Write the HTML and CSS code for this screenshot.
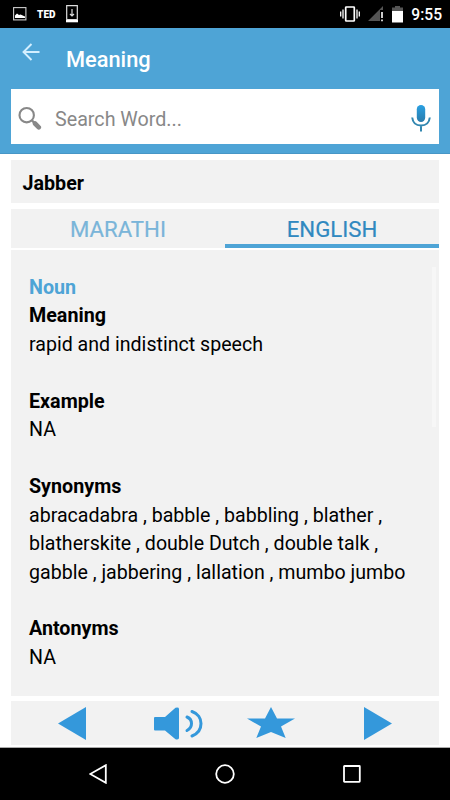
FILE: index.html
```
<!DOCTYPE html>
<html lang="en">
<head>
    <meta charset="UTF-8">
    <meta name="viewport" content="width=device-width, initial-scale=1.0">
    <title>Meaning</title>
    <link rel="stylesheet" href="styles.css">
</head>
<body>
    <div class="status-bar">
        <svg class="icon-picture" width="14" height="14" viewBox="0 0 14 14">
            <rect x="0.6" y="0.6" width="12.3" height="12.3" fill="none" stroke="#ccc" stroke-width="1.1"/>
            <path d="M2 11V8.500l2-2 2 1.500 1.500-.5 4.500 2v1.500z" fill="#fff"/>
        </svg>
        <span class="ted">TED</span>
        <svg class="icon-download" width="12" height="18" viewBox="0 0 12 18">
            <path d="M.7.7h10.600v14H.7z" fill="none" stroke="#ddd" stroke-width="1.200"/>
            <path d="M0 15h12v2.300H0z" fill="#fff"/>
            <path d="M6 4v7M4 9l2 2 2-2" fill="none" stroke="#ddd" stroke-width="1.200"/>
        </svg>
        <div class="status-right">
            <svg width="20" height="16" viewBox="0 0 20 16">
                <rect x="5.700" y="1" width="8.600" height="14" rx=".6" fill="none" stroke="#fff" stroke-width="1.700"/>
                <path d="M3 3.500v9M17 3.500v9M.7 5.500v5M19.300 5.500v5" stroke="#fff" stroke-width="1.300"/>
            </svg>
            <svg width="16" height="16" viewBox="0 0 16 16">
                <path d="M0 15L15 0v4h-3v11z" fill="#555"/>
                <path d="M14 6v6M14 13.500v1.800" stroke="#fff" stroke-width="1.600"/>
            </svg>
            <svg width="11" height="17" viewBox="0 0 11 17">
                <path d="M3 0h5v1.500h3V6H0V1.500h3z" fill="#555"/>
                <path d="M0 5h11v11.500H0z" fill="#fff"/>
            </svg>
            <span class="time">9:55</span>
        </div>
    </div>

    <header class="header">
        <div class="title-row">
            <svg class="back" width="18" height="18" viewBox="0 0 18 18">
                <path d="M17.500 9H1.500M9.500 1L1.500 9l8 8" fill="none" stroke="#d3efff" stroke-width="1.900"/>
            </svg>
            <h1>Meaning</h1>
        </div>
        <div class="search-box">
            <svg width="24" height="24" viewBox="0 0 24 24">
                <circle cx="8.700" cy="9.200" r="7.200" fill="none" stroke="#888" stroke-width="2.100"/>
                <path d="M14 14.500l3 3" stroke="#888" stroke-width="2.400"/>
                <path d="M17 17.500l3.800 3.800" stroke="#888" stroke-width="4.600" stroke-linecap="round"/>
            </svg>
            <span class="placeholder">Search Word...</span>
            <svg width="20" height="27" viewBox="0 0 20 27">
                <defs>
                    <linearGradient id="mic" x1="0" y1="0" x2="0" y2="1">
                        <stop offset="0" stop-color="#2aa0e2"/>
                        <stop offset="1" stop-color="#2a7cab"/>
                    </linearGradient>
                </defs>
                <rect x="5.800" y="0" width="8.400" height="17" rx="4.200" fill="url(#mic)"/>
                <path d="M1.200 12.500C1.800 17.700 5.400 20.500 10 20.500s8.200-2.800 8.800-8M10 20.500V26.500" fill="none" stroke="#3287b0" stroke-width="2"/>
            </svg>
        </div>
    </header>

    <main class="page">
        <div class="word">Jabber</div>
        <div class="tabs">
            <div class="tab">MARATHI</div>
            <div class="tab active">ENGLISH</div>
        </div>
        <div class="content">
            <div class="scrollbar"></div>
            <h2 class="type">Noun</h2>
            <h2>Meaning</h2>
            <p>rapid and indistinct speech</p>
            <h2>Example</h2>
            <p>NA</p>
            <h2>Synonyms</h2>
            <p>abracadabra , babble , babbling , blather ,<br>blatherskite , double Dutch , double talk ,<br>gabble , jabbering , lallation , mumbo jumbo</p>
            <h2>Antonyms</h2>
            <p>NA</p>
        </div>
        <div class="toolbar">
            <svg width="28" height="33" viewBox="0 0 28 33">
                <path d="M28 0v33L0 16.500z"/>
            </svg>
            <div class="middle">
                <svg width="49" height="33" viewBox="0 0 49 33">
                    <path d="M1 10h10L21.500.8Q25 0 25 2v29q0 2-3.500 1.200L11 23.500H1q-1 0-1-1V11q0-1 1-1z"/>
                    <path class="wave" d="M33 10c6 2.500 6 10.500 0 13.500M38 4.500c12 4 12 20 0 24.500"/>
                </svg>
                <svg width="48" height="32" viewBox="0 0 48 32">
                    <path d="M24 0l6 11.500h18L34 19.500 38.700 31 24 25 9.300 31 14 19.500 0 11.500h18z"/>
                </svg>
            </div>
            <svg width="28" height="33" viewBox="0 0 28 33">
                <path d="M0 0v33L28 16.500z"/>
            </svg>
        </div>
    </main>

    <div class="nav-bar">
        <svg width="18" height="20" viewBox="0 0 18 20">
            <path d="M16.800 1.200v17.600L1.200 10z"/>
        </svg>
        <svg width="20" height="20" viewBox="0 0 20 20">
            <circle cx="10" cy="10" r="8.800"/>
        </svg>
        <svg width="18" height="18" viewBox="0 0 18 18">
            <rect x="1" y="1" width="15.800" height="15.800" rx=".5"/>
        </svg>
    </div>
</body>
</html>
```
FILE: styles.css
```
* {
    box-sizing: border-box;
}
body {
    font-family: Roboto, sans-serif;
    margin: 0;
    width: 450px;
    height: 800px;
    overflow: hidden;
    background-color: #fff;
    color: #000;
    display: flex;
    flex-direction: column;
}
svg {
    display: block;
    flex-shrink: 0;
}
h1, h2, p {
    margin: 0;
}
.status-bar {
    height: 28px;
    background: #000;
    color: #fff;
    display: flex;
    align-items: center;
    padding: 0 9px 0 13px;
}
.ted {
    font-size: 10px;
    font-weight: 900;
    letter-spacing: 0.1px;
    width: 19px;
    margin: 0 10px 0 10px;
}
.status-right {
    margin-left: auto;
    display: flex;
    align-items: center;
    gap: 8px;
}
.time {
    font-size: 15.6px;
    font-weight: 500;
    line-height: 28px;
    padding-top: 1px;
    margin-right: -1px;
}
.header {
    height: 126px;
    background: #4ea4d6;
    padding: 0 11px;
    border-bottom: 1px solid #4796c6;
}
.title-row {
    height: 61px;
    display: flex;
    padding-left: 11px;
}
.back {
    margin-top: 15px;
}
h1 {
    color: #fff;
    font-size: 21.8px;
    font-weight: 500;
    line-height: 26px;
    margin: 19px 0 0 26px;
}
.search-box {
    height: 55px;
    background: #fff;
    display: flex;
    align-items: center;
    padding: 3px 8px 0 7px;
}
.placeholder {
    color: #888;
    font-size: 19.7px;
    margin: 2px 0 0 13px;
    flex: 1;
}
.page {
    height: 594px;
    padding: 6px 11px 0;
    border-bottom: 1px solid #aaa;
}
.word {
    height: 43px;
    background: #f2f2f2;
    padding-left: 11.5px;
    font-size: 19.7px;
    font-weight: bold;
    line-height: 47px;
}
.tabs {
    display: flex;
    height: 39px;
    margin-top: 6px;
    background: #f2f2f2;
}
.tab {
    width: 50%;
    font-size: 22.2px;
    line-height: 41px;
    text-align: center;
    color: #7ab5d9;
    -webkit-text-stroke: 0.2px;
}
.tab.active {
    color: #3089c0;
    border-bottom: 4px solid #4ea4d6;
}
.content {
    position: relative;
    height: 446px;
    margin-top: 2px;
    padding: 24px 18px 0;
    background: #f2f2f2;
    font-size: 19.6px;
    line-height: 28.45px;
}
.content h2 {
    font-size: 19.7px;
    font-weight: bold;
}
.content p + h2 {
    margin-top: 28.45px;
}
.content .type {
    color: #4ea4d6;
}
.scrollbar {
    position: absolute;
    top: 17px;
    right: 3px;
    width: 4px;
    height: 160px;
    background: #f7f7f7;
}
.toolbar {
    height: 44px;
    margin-top: 5px;
    padding: 0 47px;
    background: #f2f2f2;
    display: flex;
    align-items: center;
    justify-content: space-between;
}
.middle {
    display: flex;
    align-items: center;
    gap: 44px;
    margin-right: 2px;
}
.toolbar path {
    fill: #3498db;
}
.toolbar .wave {
    fill: none;
    stroke: #3498db;
    stroke-width: 3;
    stroke-linecap: round;
}
.nav-bar {
    height: 52px;
    background: #000;
    display: flex;
    align-items: center;
    justify-content: space-between;
    padding: 0 89px;
}
.nav-bar svg {
    fill: none;
    stroke: #fff;
    stroke-width: 1.8;
}
```
